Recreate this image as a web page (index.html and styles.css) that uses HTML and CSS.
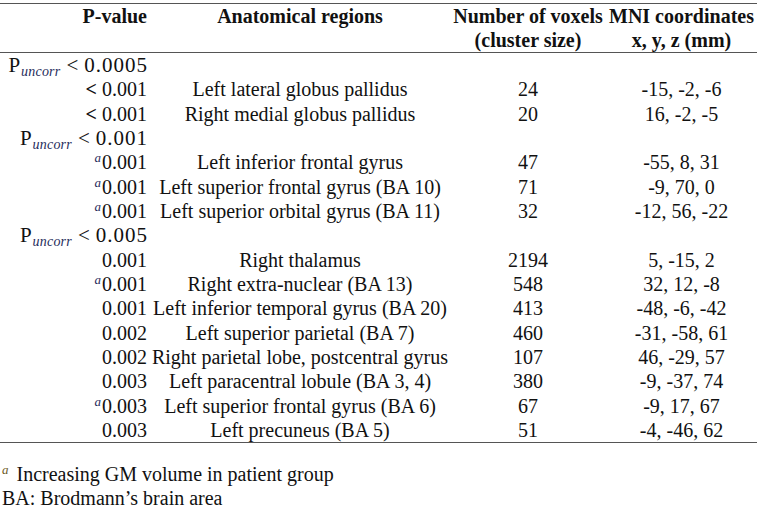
FILE: index.html
```html
<!DOCTYPE html>
<html>
<head>
<meta charset="utf-8">
<link rel="stylesheet" href="styles.css">
</head>
<body>
<div class="page">
<table class="tbl">
<colgroup>
<col class="c1"><col class="c2"><col class="c3"><col class="c4">
</colgroup>
<thead>
<tr class="h1"><th class="pv">P-value</th><th>Anatomical regions</th><th>Number of voxels</th><th>MNI coordinates</th></tr>
<tr class="h2"><th class="pv"></th><th></th><th>(cluster size)</th><th>x, y, z (mm)</th></tr>
</thead>
<tbody>
<tr><td class="pv"><span class="m">P<sub>uncorr</sub><span class="op">&lt;</span><span class="num">0.0005</span></span></td><td></td><td></td><td></td></tr>
<tr><td class="pv"><b class="lt">&lt;</b> 0.001</td><td>Left lateral globus pallidus</td><td>24</td><td>-15, -2, -6</td></tr>
<tr><td class="pv"><b class="lt">&lt;</b> 0.001</td><td>Right medial globus pallidus</td><td>20</td><td>16, -2, -5</td></tr>
<tr><td class="pv"><span class="m">P<sub>uncorr</sub><span class="op">&lt;</span><span class="num">0.001</span></span></td><td></td><td></td><td></td></tr>
<tr><td class="pv"><sup>a</sup>0.001</td><td>Left inferior frontal gyrus</td><td>47</td><td>-55, 8, 31</td></tr>
<tr><td class="pv"><sup>a</sup>0.001</td><td>Left superior frontal gyrus (BA 10)</td><td>71</td><td>-9, 70, 0</td></tr>
<tr><td class="pv"><sup>a</sup>0.001</td><td>Left superior orbital gyrus (BA 11)</td><td>32</td><td>-12, 56, -22</td></tr>
<tr><td class="pv"><span class="m">P<sub>uncorr</sub><span class="op">&lt;</span><span class="num">0.005</span></span></td><td></td><td></td><td></td></tr>
<tr><td class="pv">0.001</td><td>Right thalamus</td><td>2194</td><td>5, -15, 2</td></tr>
<tr><td class="pv"><sup>a</sup>0.001</td><td>Right extra-nuclear (BA 13)</td><td>548</td><td>32, 12, -8</td></tr>
<tr><td class="pv">0.001</td><td>Left inferior temporal gyrus (BA 20)</td><td>413</td><td>-48, -6, -42</td></tr>
<tr><td class="pv">0.002</td><td>Left superior parietal (BA 7)</td><td>460</td><td>-31, -58, 61</td></tr>
<tr><td class="pv">0.002</td><td>Right parietal lobe, postcentral gyrus</td><td>107</td><td>46, -29, 57</td></tr>
<tr><td class="pv">0.003</td><td>Left paracentral lobule (BA 3, 4)</td><td>380</td><td>-9, -37, 74</td></tr>
<tr><td class="pv"><sup>a</sup>0.003</td><td>Left superior frontal gyrus (BA 6)</td><td>67</td><td>-9, 17, 67</td></tr>
<tr class="last"><td class="pv">0.003</td><td>Left precuneus (BA 5)</td><td>51</td><td>-4, -46, 62</td></tr>
</tbody>
</table>
<div class="notes">
<p><sup>a</sup> Increasing GM volume in patient group</p>
<p>BA: Brodmann’s brain area</p>
</div>
</div>
</body>
</html>
```
FILE: styles.css
```css
html, body {
  margin: 0;
  padding: 0;
  background: #fff;
}
body {
  font-family: "Liberation Serif", "Times New Roman", serif;
  font-size: 20px;
  color: #111;
}
.page {
  padding-top: 3px;
}
.tbl {
  border-collapse: separate;
  border-spacing: 0;
  table-layout: fixed;
  width: 757px;
}
.c1 { width: 150px; }
.c2 { width: 300px; }
.c3 { width: 156px; }
.c4 { width: 151px; }
.tbl th, .tbl td {
  padding: 0;
  text-align: center;
  white-space: nowrap;
  line-height: 24.33px;
  font-weight: normal;
}
.tbl th {
  font-weight: bold;
  line-height: 24px;
}
.tbl .pv {
  text-align: right;
  padding-right: 3px;
}
.h1 th {
  border-top: 1px solid #555;
}
.h2 th {
  border-bottom: 1px solid #555;
}
.last td {
  border-bottom: 1px solid #555;
}
.m {
  font-size: 21px;
}
.m sub {
  font-style: italic;
  font-size: 14px;
  line-height: 0;
  color: #1f2d5c;
  vertical-align: baseline;
  position: relative;
  top: 4px;
  margin-left: 1px;
  letter-spacing: 0.2px;
}
.op {
  margin: 0 6px 0 6px;
}
.num {
  letter-spacing: 1px;
  margin-right: -1px;
}
.lt {
  font-weight: bold;
}
sup {
  font-style: italic;
  font-size: 13px;
  color: #1f2d5c;
  line-height: 0;
  vertical-align: baseline;
  position: relative;
  top: -7px;
  margin-right: 1px;
}
.notes {
  margin-top: 19px;
  padding-left: 2px;
}
.notes p {
  margin: 0;
  line-height: 24px;
}
.notes sup {
  color: #6b5a1f;
  margin-right: 3px;
}
```
